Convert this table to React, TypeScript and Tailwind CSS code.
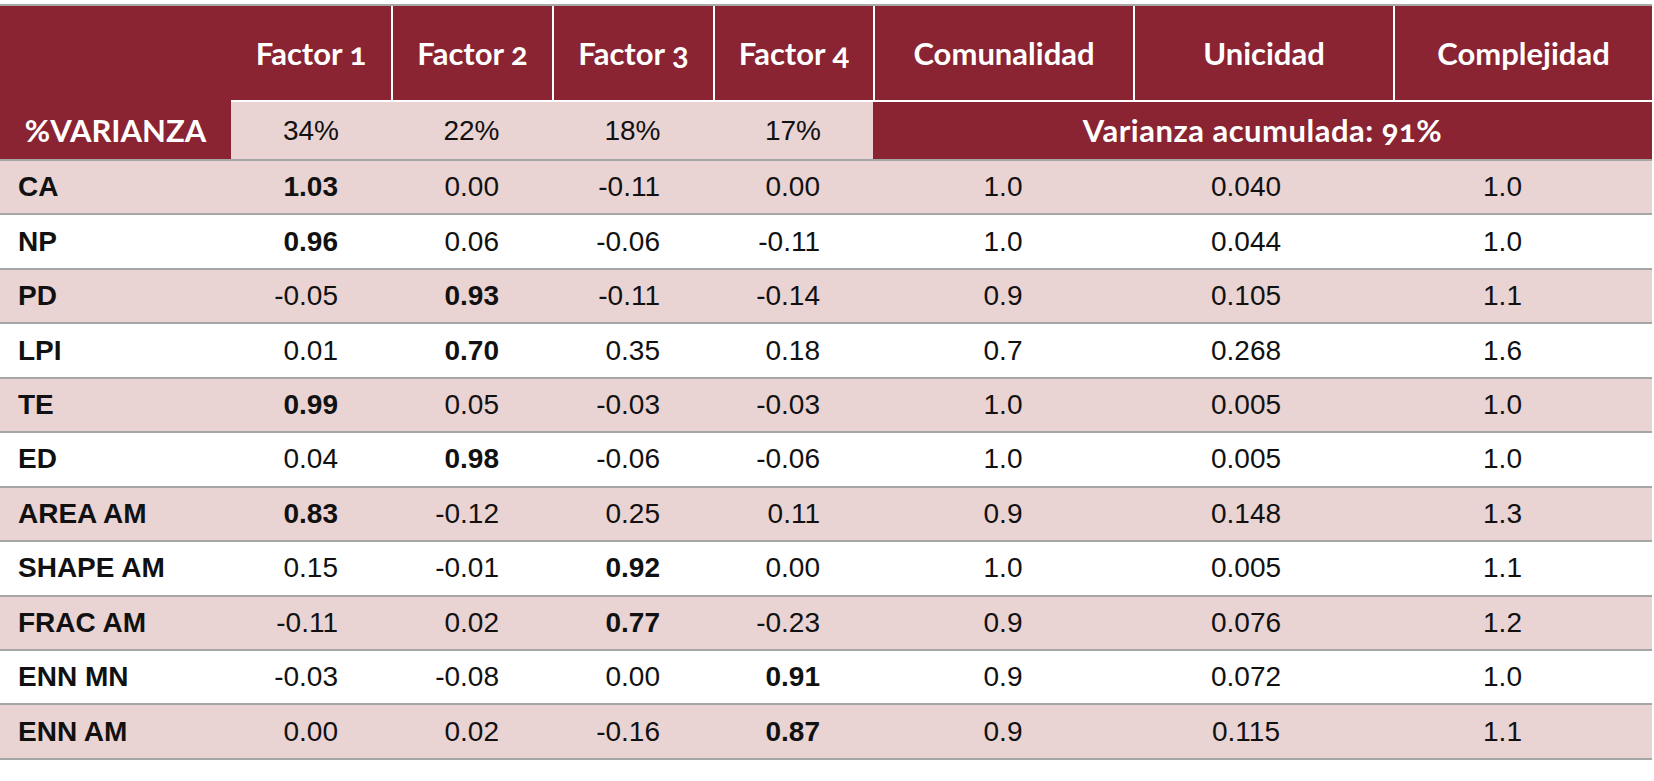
import React from 'react';

const cols = 'grid grid-cols-[231px_160px_161px_161px_160px_260px_260px_259px]';

type Row = { label: string; f: string[]; bold: number; com: string; uni: string; comp: string };

const rows: Row[] = [
  { label: 'CA', f: ['1.03', '0.00', '-0.11', '0.00'], bold: 0, com: '1.0', uni: '0.040', comp: '1.0' },
  { label: 'NP', f: ['0.96', '0.06', '-0.06', '-0.11'], bold: 0, com: '1.0', uni: '0.044', comp: '1.0' },
  { label: 'PD', f: ['-0.05', '0.93', '-0.11', '-0.14'], bold: 1, com: '0.9', uni: '0.105', comp: '1.1' },
  { label: 'LPI', f: ['0.01', '0.70', '0.35', '0.18'], bold: 1, com: '0.7', uni: '0.268', comp: '1.6' },
  { label: 'TE', f: ['0.99', '0.05', '-0.03', '-0.03'], bold: 0, com: '1.0', uni: '0.005', comp: '1.0' },
  { label: 'ED', f: ['0.04', '0.98', '-0.06', '-0.06'], bold: 1, com: '1.0', uni: '0.005', comp: '1.0' },
  { label: 'AREA AM', f: ['0.83', '-0.12', '0.25', '0.11'], bold: 0, com: '0.9', uni: '0.148', comp: '1.3' },
  { label: 'SHAPE AM', f: ['0.15', '-0.01', '0.92', '0.00'], bold: 2, com: '1.0', uni: '0.005', comp: '1.1' },
  { label: 'FRAC AM', f: ['-0.11', '0.02', '0.77', '-0.23'], bold: 2, com: '0.9', uni: '0.076', comp: '1.2' },
  { label: 'ENN MN', f: ['-0.03', '-0.08', '0.00', '0.91'], bold: 3, com: '0.9', uni: '0.072', comp: '1.0' },
  { label: 'ENN AM', f: ['0.00', '0.02', '-0.16', '0.87'], bold: 3, com: '0.9', uni: '0.115', comp: '1.1' },
];

const headers = ['Factor 1', 'Factor 2', 'Factor 3', 'Factor 4', 'Comunalidad', 'Unicidad', 'Complejidad'];
const shares = ['34%', '22%', '18%', '17%'];

export default function App() {
  return (
    <div className="min-h-screen bg-white pt-[4px] text-[#111] font-['Liberation_Sans',Arial,sans-serif]">
      <div className="w-[1652px]">
        {/* header */}
        <div className={`${cols} border-t-2 border-b-2 border-t-[#a6a6a6] border-b-[#a6a6a6]`}>
          <div className="row-span-2 bg-[#8a2332] flex flex-col justify-end">
            <div className="h-[57px] flex items-center justify-center text-white font-bold text-[31px] font-['Lato',sans-serif]">
              %VARIANZA
            </div>
          </div>
          {headers.map((h, i) => (
            <div
              key={h}
              className={`h-[96px] bg-[#8a2332] border-b-2 border-white flex items-center justify-center text-white font-bold text-[31px] font-['Lato',sans-serif] oldstyle-nums ${i > 0 ? 'border-l-2' : ''}`}
            >
              {h}
            </div>
          ))}
          {shares.map((s) => (
            <div key={s} className="h-[57px] bg-[#e9d3d3] flex items-center justify-center text-[28px]">
              {s}
            </div>
          ))}
          <div className="col-span-3 h-[57px] bg-[#8a2332] flex items-center justify-center text-white font-bold text-[31px] tracking-[0.5px] font-['Lato',sans-serif] oldstyle-nums">
            Varianza acumulada: 91%
          </div>
        </div>

        {/* body */}
        {rows.map((r, idx) => (
          <div
            key={r.label}
            className={`${cols} h-[54.45px] border-b-2 border-[#a6a6a6] text-[28px] ${idx % 2 === 0 ? 'bg-[#e9d3d3]' : 'bg-white'}`}
          >
            <div className="flex items-center pl-[18px] font-bold">{r.label}</div>
            {r.f.map((v, i) => (
              <div key={i} className={`flex items-center justify-end pr-[53px] ${i === r.bold ? 'font-bold' : ''}`}>
                {v}
              </div>
            ))}
            <div className="flex items-center justify-center">{r.com}</div>
            <div className="flex items-center justify-center pr-[34px]">{r.uni}</div>
            <div className="flex items-center justify-center pr-[40px]">{r.comp}</div>
          </div>
        ))}
      </div>
    </div>
  );
}
